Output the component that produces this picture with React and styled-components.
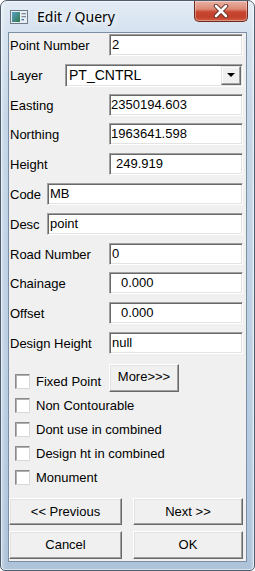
import React from 'react';
import styled, { createGlobalStyle } from 'styled-components';

const GlobalStyle = createGlobalStyle`
    html, body {
        margin: 0;
        padding: 0;
        background: #ffffff;
    }
    body {
        font-family: "Liberation Sans", Arial, sans-serif;
        font-size: 13px;
    }
`

const Window = styled.div`
    box-sizing: border-box;
    width: 255px;
    height: 571px;
    border: 1px solid #4e5d6d;
    border-radius: 7px 7px 5px 5px;
    background:
        linear-gradient(90deg, rgba(255,255,255,0.35) 0px, rgba(255,255,255,0) 5px, rgba(255,255,255,0) 249px, rgba(255,255,255,0.35) 253px),
        linear-gradient(180deg, #e3ecf5 0px, #d5e2ef 30px, #c3d5e7 120px, #b9cde2 400px, #adc3da 571px);
    box-shadow: inset 0 0 0 1px rgba(255,255,255,0.55);
    display: flex;
    flex-direction: column;
    overflow: hidden;
`

const TitleBar = styled.div`
    height: 31px;
    display: flex;
    align-items: flex-start;
    padding-left: 9px;
`

const AppIcon = styled.svg`
    width: 18px;
    height: 14px;
    margin-top: 9px;
`

const Title = styled.div`
    font-family: "Noto Sans", "Open Sans", sans-serif;
    font-size: 14px;
    color: #000;
    margin-left: 9px;
    margin-top: 6px;
    text-shadow: 0 0 6px rgba(255,255,255,0.95), 0 0 10px rgba(255,255,255,0.9);
`

const CloseButton = styled.div`
    margin-left: auto;
    margin-right: 6px;
    width: 54px;
    height: 21px;
    box-sizing: border-box;
    border: 1px solid #6e2a1f;
    border-top: none;
    border-radius: 0 0 5px 5px;
    background: linear-gradient(180deg, #e9b2a5 0px, #dc8a76 8px, #c8462f 11px, #c2412a 16px, #d3654a 21px);
    box-shadow: inset 0 0 0 1px rgba(255,255,255,0.35);
    display: flex;
    align-items: center;
    justify-content: center;
`

const Client = styled.div`
    box-sizing: border-box;
    width: 239px;
    height: 530px;
    margin-left: 7px;
    border: 1px solid #7b8ea3;
    background: #f0f0f0;
    display: flex;
    flex-direction: column;
`

const Form = styled.div`
    padding: 1px 3px 0 0;
    display: flex;
    flex-direction: column;
`

const Row = styled.div`
    height: ${(p) => (p.last ? 22 : 29.8)}px;
    display: grid;
    grid-template-columns: ${(p) => p.labelWidth}px 1fr;
    align-items: start;
`

const Label = styled.div`
    padding-left: 1px;
    height: 22px;
    line-height: 24px;
    color: #000;
    white-space: nowrap;
`

const Field = styled.div`
    box-sizing: border-box;
    height: 22px;
    background: #fff;
    border: 1px solid;
    border-color: #a0a0a0 #ffffff #ffffff #a0a0a0;
    box-shadow: inset 1px 1px 0 #696969, inset -1px -1px 0 #e3e3e3;
    padding-left: ${(p) => p.indent || 2}px;
    line-height: 20px;
    color: #000;
    white-space: pre;
    overflow: hidden;
`

const Select = styled(Field)`
    height: 23px;
    display: flex;
    align-items: center;
    padding-right: 1px;
    padding-left: 3px;
`

const SelectText = styled.span`
    flex: 1;
    font-size: 14px;
`

const DropButton = styled.div`
    box-sizing: border-box;
    width: 20px;
    height: 19px;
    background: #f0f0f0;
    border: 1px solid;
    border-color: #e3e3e3 #696969 #696969 #e3e3e3;
    box-shadow: inset -1px -1px 0 #a0a0a0, inset 1px 1px 0 #ffffff;
    display: flex;
    align-items: center;
    justify-content: center;
`

const Arrow = styled.div`
    width: 0;
    height: 0;
    border-left: 4px solid transparent;
    border-right: 4px solid transparent;
    border-top: 4px solid #000;
`

const Checks = styled.div`
    margin-top: 10px;
    padding-left: 6px;
    display: flex;
    flex-direction: column;
`

const CheckRow = styled.div`
    height: ${(p) => (p.first ? 30 : 24)}px;
    display: flex;
    align-items: flex-start;
`

const CheckItem = styled.div`
    display: flex;
    align-items: center;
    width: ${(p) => (p.width ? `${p.width}px` : 'auto')};
    margin-top: ${(p) => (p.first ? 10 : 4)}px;
`

const Box = styled.div`
    box-sizing: border-box;
    width: 15px;
    height: 15px;
    background: #fff;
    border: 1px solid;
    border-color: #8a8a8a #d8d8d8 #d8d8d8 #8a8a8a;
    box-shadow: inset 1px 1px 0 #b0b0b0;
`

const CheckLabel = styled.span`
    margin-left: 6px;
    line-height: 15px;
    color: #000;
    white-space: nowrap;
`

const Button = styled.div`
    box-sizing: border-box;
    height: ${(p) => p.height || 28}px;
    width: ${(p) => (p.width ? `${p.width}px` : 'auto')};
    background: #f0f0f0;
    border: 1px solid;
    border-color: #ffffff #696969 #696969 #ffffff;
    box-shadow: inset -1px -1px 0 #a0a0a0, inset 1px 1px 0 #e3e3e3;
    display: flex;
    align-items: center;
    justify-content: center;
    color: #000;
    white-space: nowrap;
`

const MoreButton = styled(Button)`
    padding-bottom: 3px;
`

const Buttons = styled.div`
    margin-top: 8px;
    display: grid;
    grid-template-columns: 113px 110px;
    column-gap: 11px;
    row-gap: 6px;
`

const fields = [
    { label: 'Easting', value: '2350194.603', indent: 1 },
    { label: 'Northing', value: '1963641.598', indent: 1 },
    { label: 'Height', value: '249.919', indent: 6 },
]

const fields2 = [
    { label: 'Road Number', value: '0', indent: 2 },
    { label: 'Chainage', value: '0.000', indent: 11 },
    { label: 'Offset', value: '0.000', indent: 11 },
    { label: 'Design Height', value: 'null', indent: 2, last: true },
]

const checks = ['Non Contourable', 'Dont use in combined', 'Design ht in combined', 'Monument']

const App = () => {
    return (
        <>
            <GlobalStyle />
            <Window>
                <TitleBar>
                    <AppIcon viewBox="0 0 18 14">
                        <defs>
                            <linearGradient id="pane" x1="0" y1="0" x2="1" y2="1">
                                <stop offset="0" stopColor="#5aa0c8" />
                                <stop offset="1" stopColor="#2f7a4c" />
                            </linearGradient>
                        </defs>
                        <rect x="0.5" y="0.5" width="17" height="13" fill="#e8eef2" stroke="#6d7c88" />
                        <rect x="2" y="2" width="8" height="10" fill="url(#pane)" />
                        <rect x="11.5" y="3" width="4.5" height="1.3" fill="#7d8c99" />
                        <rect x="11.5" y="6" width="4.5" height="1.3" fill="#7d8c99" />
                        <rect x="11.5" y="9" width="2.5" height="1.3" fill="#3a6ea5" />
                    </AppIcon>
                    <Title>Edit / Query</Title>
                    <CloseButton>
                        <svg width="16" height="14" viewBox="0 0 16 14">
                            <path d="M3 2 L13 12 M13 2 L3 12" stroke="#5a2a22" strokeWidth="4.4" strokeLinecap="round" />
                            <path d="M3 2 L13 12 M13 2 L3 12" stroke="#ffffff" strokeWidth="2.6" strokeLinecap="round" />
                        </svg>
                    </CloseButton>
                </TitleBar>
                <Client>
                    <Form>
                        <Row labelWidth={100}>
                            <Label>Point Number</Label>
                            <Field indent={2}>2</Field>
                        </Row>
                        <Row labelWidth={56}>
                            <Label>Layer</Label>
                            <Select>
                                <SelectText>PT_CNTRL</SelectText>
                                <DropButton><Arrow /></DropButton>
                            </Select>
                        </Row>
                        {fields.map((f) => (
                            <Row key={f.label} labelWidth={100}>
                                <Label>{f.label}</Label>
                                <Field indent={f.indent}>{f.value}</Field>
                            </Row>
                        ))}
                        <Row labelWidth={38}>
                            <Label>Code</Label>
                            <Field indent={2}>MB</Field>
                        </Row>
                        <Row labelWidth={38}>
                            <Label>Desc</Label>
                            <Field indent={2}>point</Field>
                        </Row>
                        {fields2.map((f) => (
                            <Row key={f.label} labelWidth={100} last={f.last}>
                                <Label>{f.label}</Label>
                                <Field indent={f.indent}>{f.value}</Field>
                            </Row>
                        ))}
                    </Form>
                    <Checks>
                        <CheckRow first>
                            <CheckItem first width={94}>
                                <Box />
                                <CheckLabel>Fixed Point</CheckLabel>
                            </CheckItem>
                            <MoreButton width={70} height={28}>More&gt;&gt;&gt;</MoreButton>
                        </CheckRow>
                        {checks.map((c) => (
                            <CheckRow key={c}>
                                <CheckItem>
                                    <Box />
                                    <CheckLabel>{c}</CheckLabel>
                                </CheckItem>
                            </CheckRow>
                        ))}
                    </Checks>
                    <Buttons>
                        <Button height={27}>&lt;&lt; Previous</Button>
                        <Button height={27}>Next &gt;&gt;</Button>
                        <Button height={28}>Cancel</Button>
                        <Button height={28}>OK</Button>
                    </Buttons>
                </Client>
            </Window>
        </>
    )
}

export default App
